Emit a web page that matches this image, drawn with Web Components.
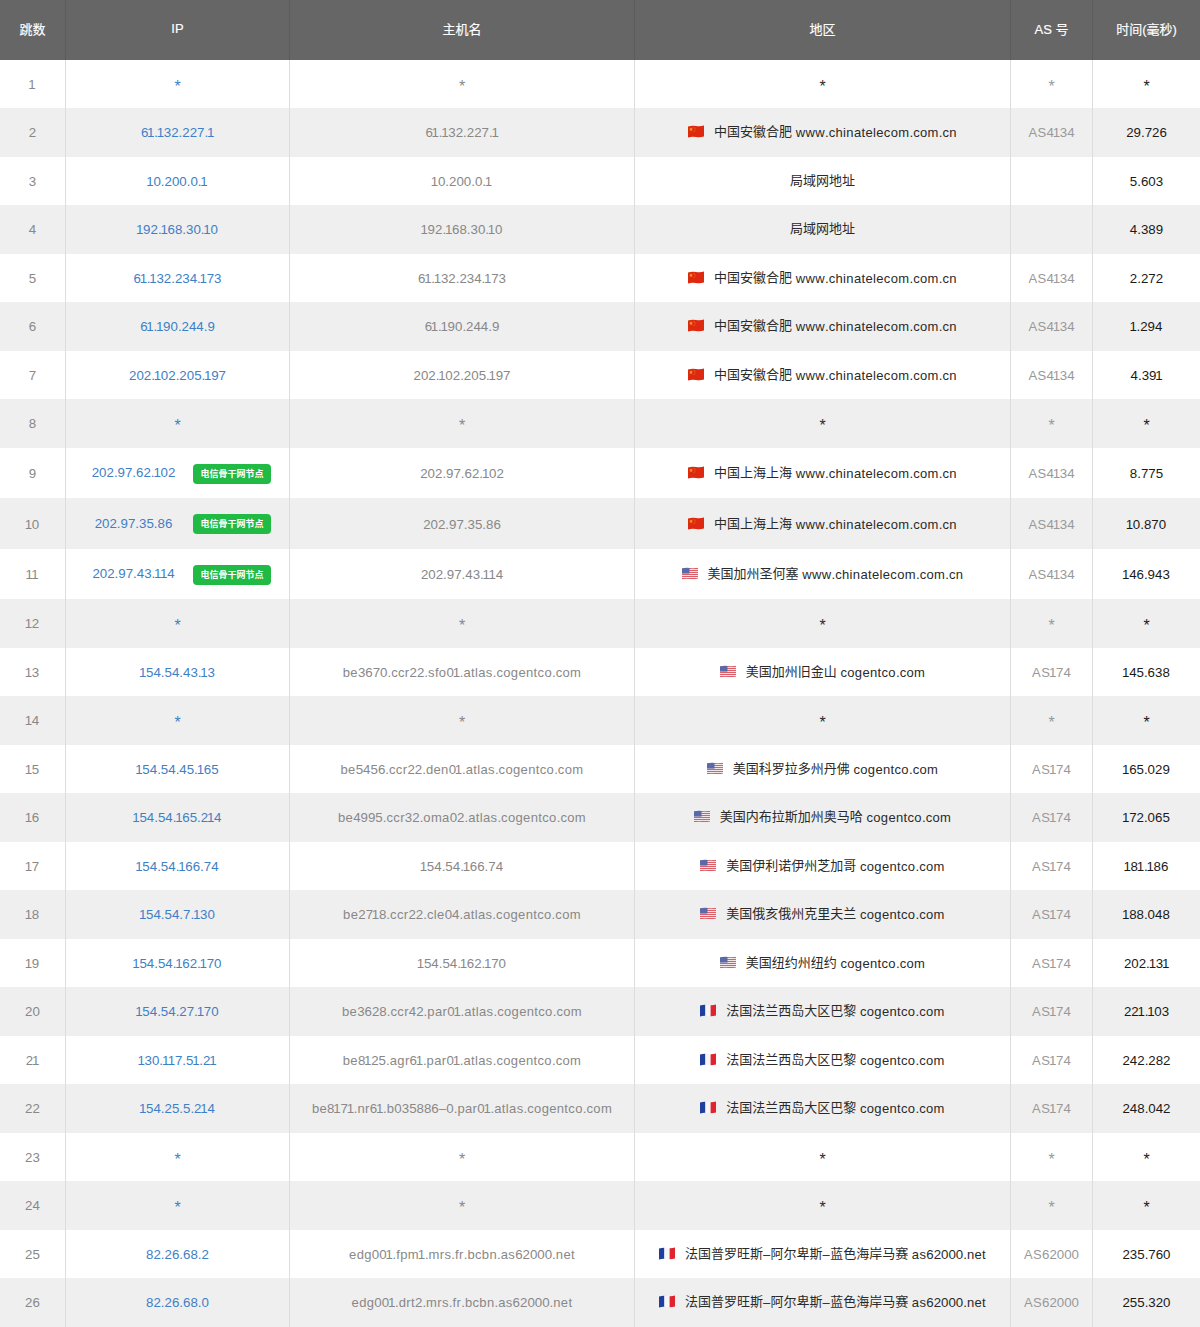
<!DOCTYPE html>
<html lang="zh">
<head>
<meta charset="utf-8">
<title>路由跟踪</title>
<style>
    html, body { margin: 0; padding: 0; background: #fff; }
</style>
</head>
<body>
<trace-table></trace-table>
<script>
// 国旗，画成略带波浪的 emoji 样子
const WAVE = 'M0 1.4Q4 .2 8 .9T16 .6V11.6Q12 12.8 8 12.1T0 12.4Z';
const FLAGS = {
    cn: `<svg width="16" height="13" viewBox="0 0 16 13">
        <path d="${WAVE}" fill="#de2910"/>
        <path d="M3 2.2l.6 1.4 1.4.1-1.1.9.4 1.4-1.3-.8-1.2.8.4-1.4-1.1-.9 1.4-.1Z" fill="#f0a818"/>
        <circle cx="6" cy="2.2" r=".45" fill="#f0a818"/><circle cx="7" cy="3.4" r=".45" fill="#f0a818"/>
        <circle cx="7" cy="5" r=".45" fill="#f0a818"/><circle cx="6" cy="6.2" r=".45" fill="#f0a818"/>
    </svg>`,
    us: `<svg width="16" height="13" viewBox="0 0 16 13">
        <defs><clipPath id="w"><path d="${WAVE}"/></clipPath></defs>
        <g clip-path="url(#w)">
            <rect width="16" height="13" fill="#f4e6e6"/>
            <path d="M0 1.5h16M0 3.5h16M0 5.5h16M0 7.5h16M0 9.5h16M0 11.5h16" stroke="#d9606a" stroke-width="1"/>
            <rect width="7.5" height="6.6" fill="#5a6aa8"/>
        </g>
    </svg>`,
    fr: `<svg width="16" height="13" viewBox="0 0 16 13">
        <defs><clipPath id="w"><path d="${WAVE}"/></clipPath></defs>
        <g clip-path="url(#w)">
            <rect width="5.4" height="13" fill="#1f3f9e"/>
            <rect x="5.4" width="5.2" height="13" fill="#f6f6f6"/>
            <rect x="10.6" width="5.4" height="13" fill="#e0242f"/>
        </g>
    </svg>`
};

// 数字偏宽而 1 很窄、字母偏宽、中文略上移，分开包一层
function runs(text) {
    return String(text).replace(/[0-9.]+|[\u4e00-\u9fff]+|[A-Za-z\u2013]+/g, (m) => {
        if (/^[0-9.]/.test(m)) return `<span class="n">${m.replace(/1/g, '<span class="o">1</span>')}</span>`;
        if (/^[\u4e00-\u9fff]/.test(m)) return `<span class="c">${m}</span>`;
        return `<span class="l">${m}</span>`;
    });
}

class FlagIcon extends HTMLElement {
    constructor() {
        super();
        this.attachShadow({ mode: 'open' });
    }

    connectedCallback() {
        this.shadowRoot.innerHTML = `
            <style>
                :host { display: inline-block; width: 16px; height: 13px; margin-right: 10px; vertical-align: -1px; }
                svg { display: block; }
            </style>
            ${FLAGS[this.getAttribute('code')] || ''}`;
    }
}

class NodeBadge extends HTMLElement {
    constructor() {
        super();
        this.attachShadow({ mode: 'open' });
    }

    connectedCallback() {
        this.shadowRoot.innerHTML = `
            <style>
                :host {
                    display: inline-block;
                    width: 78px;
                    height: 20px;
                    background: #21ba45;
                    border-radius: 4px;
                    color: #fff;
                    font: bold 9px/20px "Noto Sans CJK SC", sans-serif;
                    text-align: center;
                }
            </style>
            <slot></slot>`;
    }
}

class TraceRow extends HTMLElement {
    constructor() {
        super();
        this.attachShadow({ mode: 'open' });
    }

    connectedCallback() {
        const [hop, ip, host, flag, place, site, as, time, badge] = this.data;
        const cell = (v) => (v === '*' ? '<span class="star">*</span>' : `<span>${runs(v)}</span>`);
        const ipCell = badge
            ? `<div class="ip-wrap"><span class="ip">${runs(ip)}</span><node-badge>电信骨干网节点</node-badge></div>`
            : `<span class="ip">${cell(ip)}</span>`;
        const region = place
            ? `<span>${flag ? `<flag-icon code="${flag}"></flag-icon>` : ''}${runs(place)}${site ? ' ' + runs(site) : ''}</span>`
            : cell('*');
        this.shadowRoot.innerHTML = `
            <style>
                :host {
                    display: grid;
                    grid-template-columns: 66px 224px 345px 376px 82px 107px;
                    height: ${badge ? 50.5 : 48.5}px;
                    font: 13px/15px "Liberation Sans", "Noto Sans CJK SC", sans-serif;
                    background: var(--row-bg, #fff);
                }
                .cell {
                    display: flex;
                    align-items: center;
                    justify-content: center;
                    padding-top: ${badge ? 1.5 : 0.7}px;
                    border-right: 1px solid #ddd;
                    box-sizing: border-box;
                    white-space: nowrap;
                }
                .cell:last-child { border-right: 0; }
                .n { font-size: 13.3px; }
                .o { margin-left: -1.2px; letter-spacing: -.3px; }
                .l { letter-spacing: .35px; }
                .c { vertical-align: 1px; line-height: 0; }
                .star { display: block; font-size: 16px; line-height: 16px; padding-top: 5px; }
                .hop { color: #888; }
                .ip { color: #3e80c6; }
                .ip-wrap { display: flex; align-items: center; width: 100%; box-sizing: border-box; padding: 0 18px 0 8px; }
                .ip-wrap .ip { flex: 1; text-align: center; padding-bottom: 2px; }
                .host { color: #888; }
                .region { color: #2a2a2a; }
                .asn { color: #999; }
                .time { color: #1a1a1a; }
            </style>
            <div class="cell hop">${runs(hop)}</div>
            <div class="cell">${ipCell}</div>
            <div class="cell host">${cell(host)}</div>
            <div class="cell region">${region}</div>
            <div class="cell asn">${as ? cell(as) : ''}</div>
            <div class="cell time">${cell(time)}</div>`;
    }
}

class TraceTable extends HTMLElement {
    constructor() {
        super();
        this.attachShadow({ mode: 'open' });
    }

    connectedCallback() {
        this.shadowRoot.innerHTML = `
            <style>
                :host { display: block; width: 1200px; }
                .head {
                    display: grid;
                    grid-template-columns: 66px 224px 345px 376px 82px 107px;
                    height: 59.5px;
                    background: #666;
                    color: #fff;
                    font: 13px "Liberation Sans", "Noto Sans CJK SC", sans-serif;
                    -webkit-text-stroke: .15px #fff;
                }
                .head div {
                    display: flex;
                    align-items: center;
                    justify-content: center;
                    box-sizing: border-box;
                    padding-bottom: 3px;
                    border-right: 1px solid #5c5c5c;
                }
                .head div:last-child { border-right: 0; }
                trace-row:nth-child(odd) { --row-bg: #fff; }
                trace-row:nth-child(even) { --row-bg: #efefef; }
            </style>
            <div class="head">
                <div>跳数</div><div>IP</div><div>主机名</div><div>地区</div><div>AS 号</div><div>时间(毫秒)</div>
            </div>
            <div class="rows"></div>`;
        const rows = this.shadowRoot.querySelector('.rows');
        const tel = 'www.chinatelecom.com.cn';
        const cog = 'cogentco.com';
        const HOPS = [
            [1, '*', '*', '', '', '', '*', '*'],
            [2, '61.132.227.1', '61.132.227.1', 'cn', '中国安徽合肥', tel, 'AS4134', '29.726'],
            [3, '10.200.0.1', '10.200.0.1', '', '局域网地址', '', '', '5.603'],
            [4, '192.168.30.10', '192.168.30.10', '', '局域网地址', '', '', '4.389'],
            [5, '61.132.234.173', '61.132.234.173', 'cn', '中国安徽合肥', tel, 'AS4134', '2.272'],
            [6, '61.190.244.9', '61.190.244.9', 'cn', '中国安徽合肥', tel, 'AS4134', '1.294'],
            [7, '202.102.205.197', '202.102.205.197', 'cn', '中国安徽合肥', tel, 'AS4134', '4.391'],
            [8, '*', '*', '', '', '', '*', '*'],
            [9, '202.97.62.102', '202.97.62.102', 'cn', '中国上海上海', tel, 'AS4134', '8.775', true],
            [10, '202.97.35.86', '202.97.35.86', 'cn', '中国上海上海', tel, 'AS4134', '10.870', true],
            [11, '202.97.43.114', '202.97.43.114', 'us', '美国加州圣何塞', tel, 'AS4134', '146.943', true],
            [12, '*', '*', '', '', '', '*', '*'],
            [13, '154.54.43.13', 'be3670.ccr22.sfo01.atlas.cogentco.com', 'us', '美国加州旧金山', cog, 'AS174', '145.638'],
            [14, '*', '*', '', '', '', '*', '*'],
            [15, '154.54.45.165', 'be5456.ccr22.den01.atlas.cogentco.com', 'us', '美国科罗拉多州丹佛', cog, 'AS174', '165.029'],
            [16, '154.54.165.214', 'be4995.ccr32.oma02.atlas.cogentco.com', 'us', '美国内布拉斯加州奥马哈', cog, 'AS174', '172.065'],
            [17, '154.54.166.74', '154.54.166.74', 'us', '美国伊利诺伊州芝加哥', cog, 'AS174', '181.186'],
            [18, '154.54.7.130', 'be2718.ccr22.cle04.atlas.cogentco.com', 'us', '美国俄亥俄州克里夫兰', cog, 'AS174', '188.048'],
            [19, '154.54.162.170', '154.54.162.170', 'us', '美国纽约州纽约', cog, 'AS174', '202.131'],
            [20, '154.54.27.170', 'be3628.ccr42.par01.atlas.cogentco.com', 'fr', '法国法兰西岛大区巴黎', cog, 'AS174', '221.103'],
            [21, '130.117.51.21', 'be8125.agr61.par01.atlas.cogentco.com', 'fr', '法国法兰西岛大区巴黎', cog, 'AS174', '242.282'],
            [22, '154.25.5.214', 'be8171.nr61.b035886–0.par01.atlas.cogentco.com', 'fr', '法国法兰西岛大区巴黎', cog, 'AS174', '248.042'],
            [23, '*', '*', '', '', '', '*', '*'],
            [24, '*', '*', '', '', '', '*', '*'],
            [25, '82.26.68.2', 'edg001.fpm1.mrs.fr.bcbn.as62000.net', 'fr', '法国普罗旺斯–阿尔卑斯–蓝色海岸马赛', 'as62000.net', 'AS62000', '235.760'],
            [26, '82.26.68.0', 'edg001.drt2.mrs.fr.bcbn.as62000.net', 'fr', '法国普罗旺斯–阿尔卑斯–蓝色海岸马赛', 'as62000.net', 'AS62000', '255.320']
        ];
        HOPS.forEach((hop) => {
            const row = document.createElement('trace-row');
            row.data = hop;
            rows.appendChild(row);
        });
    }
}

customElements.define('flag-icon', FlagIcon);
customElements.define('node-badge', NodeBadge);
customElements.define('trace-row', TraceRow);
customElements.define('trace-table', TraceTable);
</script>
</body>
</html>
